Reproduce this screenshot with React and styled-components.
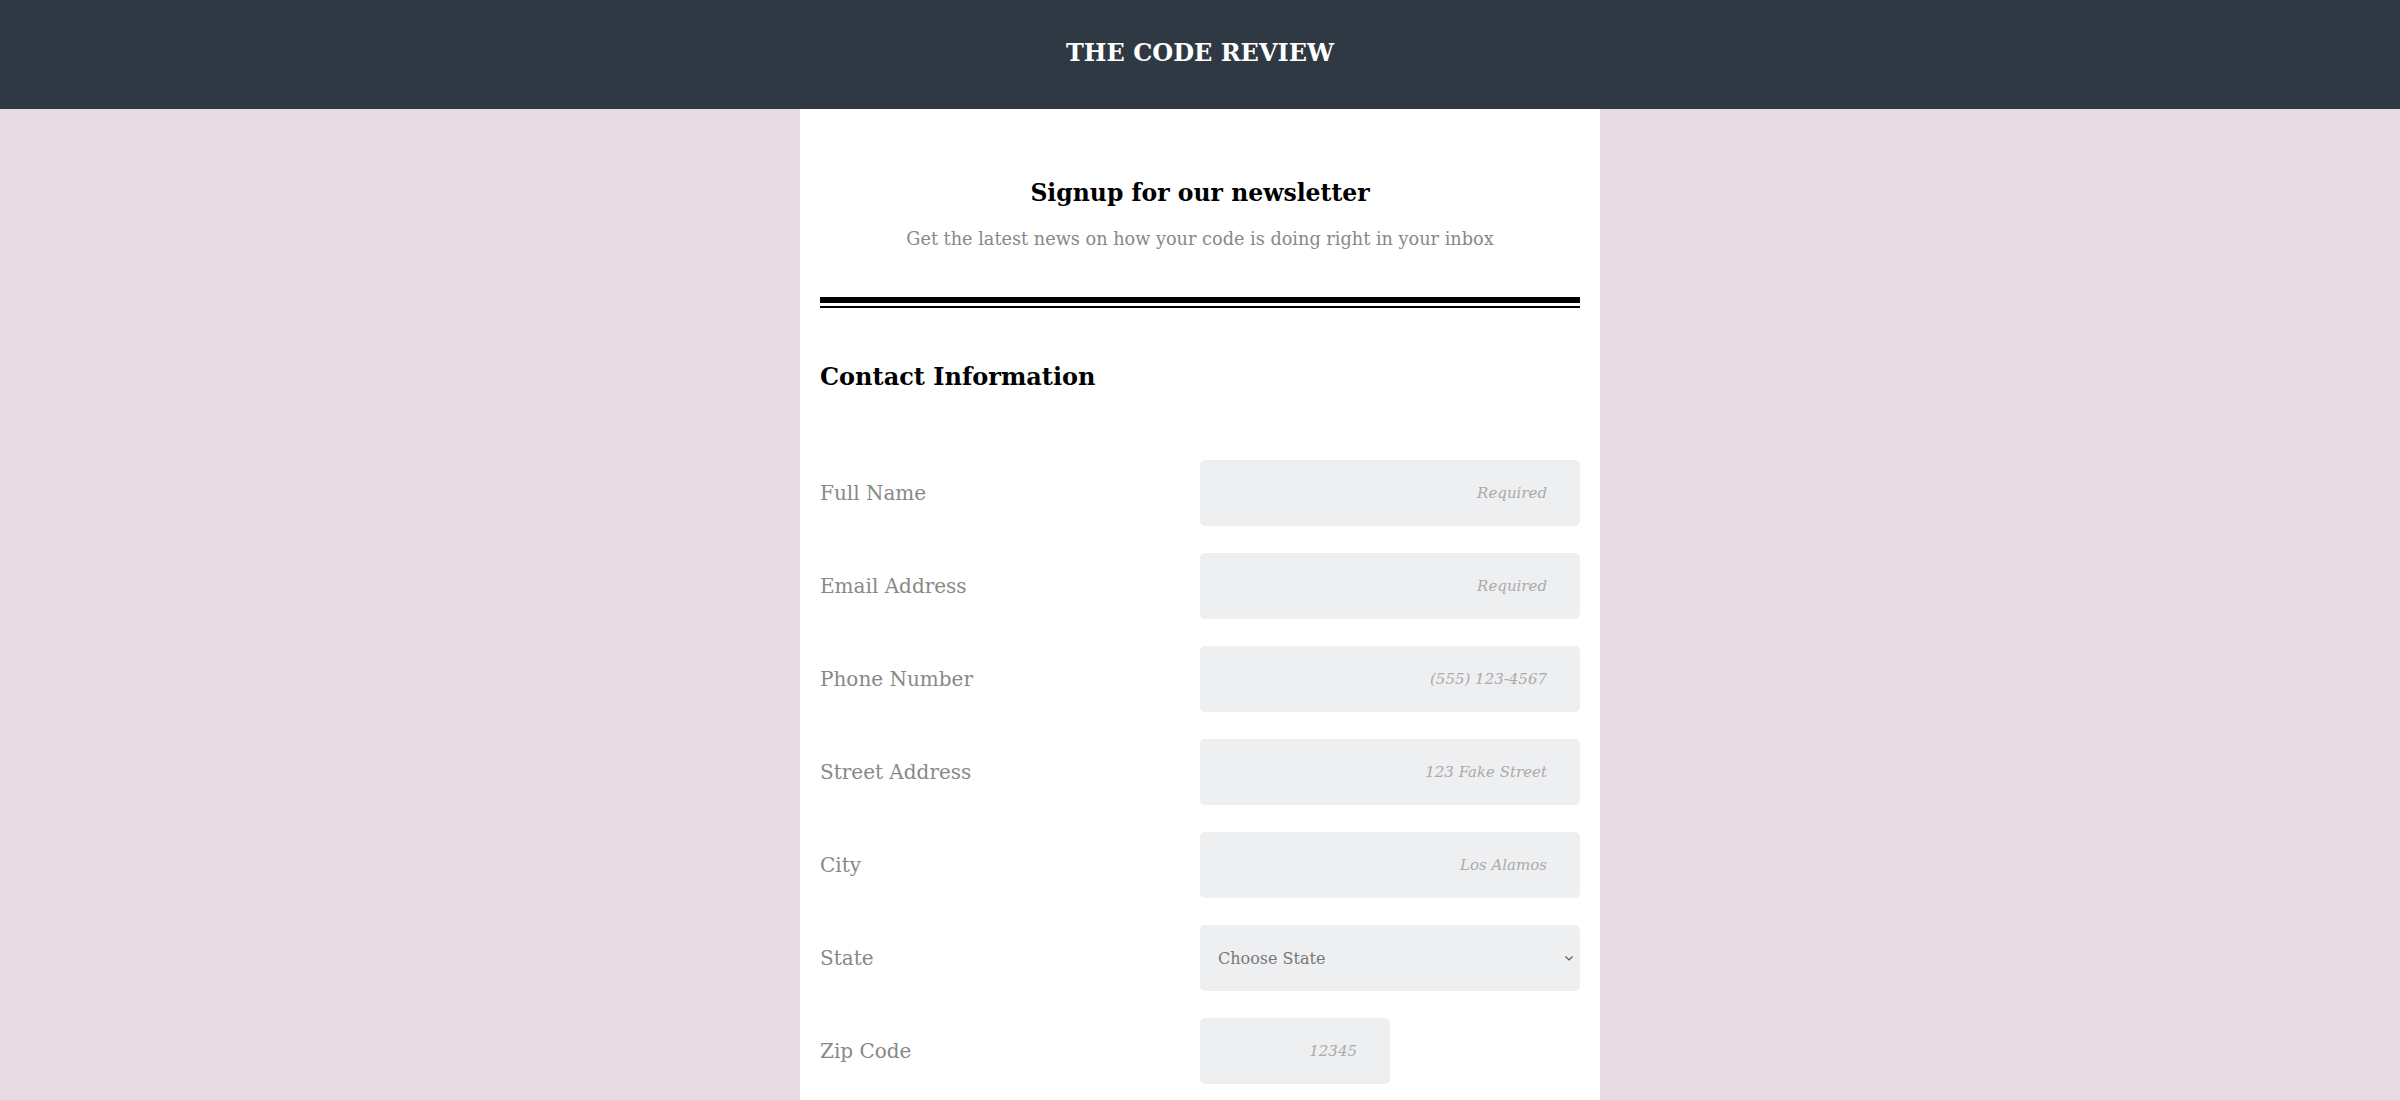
import React from "react";
import styled, { createGlobalStyle } from "styled-components";

const GlobalStyle = createGlobalStyle`
  * { box-sizing: border-box; }
  body {
    margin: 0;
    background: #e6dbe3;
    font-family: "DejaVu Serif", "Liberation Serif", serif;
  }
`;

const Header = styled.header`
  height: 109px;
  background: #2f3943;
  display: flex;
  align-items: center;
  justify-content: center;
  padding-bottom: 4px;
`;

const Brand = styled.h1`
  margin: 0;
  color: #fff;
  font-size: 24px;
  font-weight: bold;
`;

const Card = styled.main`
  width: 800px;
  margin: 0 auto;
  background: #fff;
  padding: 66px 20px 200px;
`;

const Intro = styled.section`
  text-align: center;
`;

const Title = styled.h2`
  margin: 0;
  font-size: 23.5px;
  line-height: 36px;
  font-weight: bold;
  color: #000;
`;

const Lead = styled.p`
  margin: 15px 0 0;
  font-size: 17.7px;
  line-height: 27px;
  color: #888;
`;

const DoubleRule = styled.div`
  margin-top: 44px;
  height: 11px;
  border-top: 6px solid #000;
  border-bottom: 2px solid #000;
`;

const SectionTitle = styled.h3`
  margin: 51px 0 0;
  font-size: 24px;
  line-height: 36px;
  font-weight: bold;
  color: #000;
`;

const Fields = styled.div`
  margin-top: 65px;
  display: grid;
  grid-template-columns: 1fr 1fr;
  row-gap: 27px;
  align-items: center;
`;

const Label = styled.label`
  font-size: 20px;
  color: #888;
`;

const Input = styled.input`
  width: ${(p) => (p.$half ? "50%" : "100%")};
  height: 66px;
  border: none;
  border-radius: 5px;
  background: #eeeff1;
  padding: 0 33px;
  text-align: right;
  font-family: inherit;
  font-size: 15px;
  color: #555;
  &::placeholder {
    color: #aaa;
    font-style: italic;
  }
`;

const SelectWrap = styled.div`
  position: relative;
  width: 100%;
  height: 66px;
`;

const Select = styled.select`
  appearance: none;
  width: 100%;
  height: 100%;
  border: none;
  border-radius: 5px;
  background: #eeeff1;
  padding: 0 40px 0 18px;
  font-family: inherit;
  font-size: 16px;
  color: #777;
`;

const Chevron = styled.svg`
  position: absolute;
  right: 6px;
  top: 50%;
  margin-top: -5px;
  width: 10px;
  height: 10px;
  pointer-events: none;
`;

const fields = [
  { id: "name", label: "Full Name", placeholder: "Required" },
  { id: "email", label: "Email Address", placeholder: "Required" },
  { id: "phone", label: "Phone Number", placeholder: "(555) 123-4567" },
  { id: "street", label: "Street Address", placeholder: "123 Fake Street" },
  { id: "city", label: "City", placeholder: "Los Alamos" },
];

export default function App() {
  return (
    <>
      <GlobalStyle />
      <Header>
        <Brand>THE CODE REVIEW</Brand>
      </Header>
      <Card>
        <Intro>
          <Title>Signup for our newsletter</Title>
          <Lead>Get the latest news on how your code is doing right in your inbox</Lead>
        </Intro>
        <DoubleRule />
        <SectionTitle>Contact Information</SectionTitle>
        <Fields>
          {fields.map((f) => (
            <React.Fragment key={f.id}>
              <Label htmlFor={f.id}>{f.label}</Label>
              <Input id={f.id} placeholder={f.placeholder} />
            </React.Fragment>
          ))}
          <Label htmlFor="state">State</Label>
          <SelectWrap>
            <Select id="state" defaultValue="">
              <option value="" disabled>
                Choose State
              </option>
              <option>New Mexico</option>
              <option>California</option>
            </Select>
            <Chevron viewBox="0 0 10 10">
              <path d="M1.5 3.5 L5 7 L8.5 3.5" fill="none" stroke="#555" strokeWidth="1.2" />
            </Chevron>
          </SelectWrap>
          <Label htmlFor="zip">Zip Code</Label>
          <Input id="zip" $half placeholder="12345" />
        </Fields>
      </Card>
    </>
  );
}
